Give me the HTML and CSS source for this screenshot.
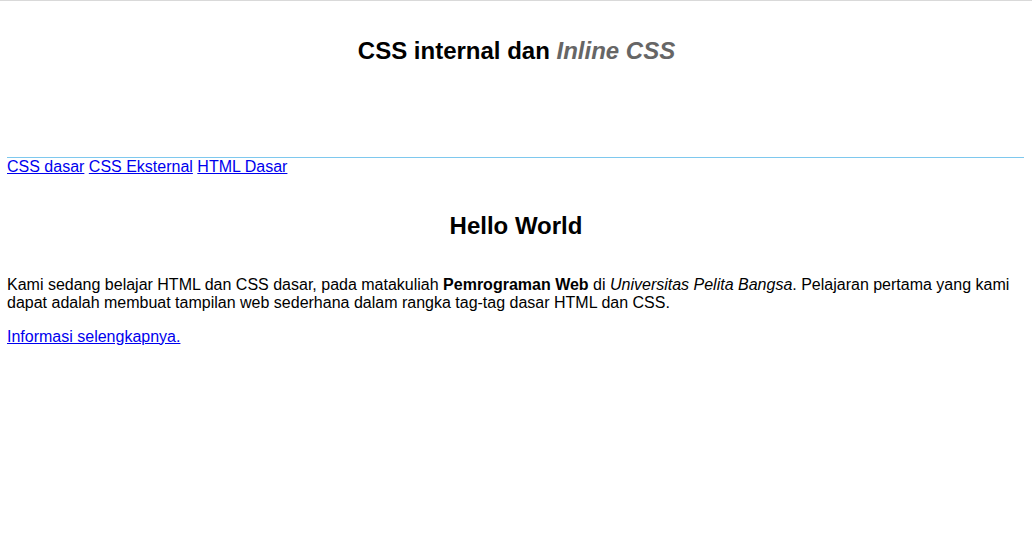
FILE: index.html
```html
<!DOCTYPE html>
<html lang="id">
<head>
<meta charset="utf-8">
<title>CSS internal dan Inline CSS</title>
<link rel="stylesheet" href="styles.css">
</head>
<body>
<header class="header">
  <h1 class="title">CSS internal dan <i class="title-em">Inline CSS</i></h1>
</header>
<nav class="nav">
  <a href="#">CSS dasar</a> <a href="#">CSS Eksternal</a> <a href="#">HTML Dasar</a>
</nav>
<main class="content">
  <h2 class="hello">Hello World</h2>
  <p class="text">Kami sedang belajar HTML dan CSS dasar, pada matakuliah <b>Pemrograman Web</b> di <i>Universitas Pelita Bangsa</i>. Pelajaran pertama yang kami dapat adalah membuat tampilan web sederhana dalam rangka tag-tag dasar HTML dan CSS.</p>
  <p class="more"><a href="#">Informasi selengkapnya.</a></p>
</main>
</body>
</html>
```
FILE: styles.css
```css
html {
  border-top: 1px solid #d9d9d9;
  background: #ffffff;
}
body {
  margin: 0 8px 0 7px;
  font-family: "Liberation Sans", Arial, sans-serif;
  font-size: 16px;
  color: #000000;
}
a {
  color: #0000ee;
  text-decoration: underline;
}
.header {
  margin-left: -7px;
  padding: 36px 0 0 9px;
  height: 157px;
  box-sizing: border-box;
  border-bottom: 1px solid #7ec8ee;
}
.title {
  margin: 0;
  font-size: 24px;
  font-weight: bold;
  text-align: center;
}
.title-em {
  color: #666666;
}
.nav {
  margin: 0;
}
.hello {
  margin: 35.6px 0 36px;
  padding-left: 1px;
  font-size: 24px;
  font-weight: bold;
  text-align: center;
}
.text {
  margin: 0 0 16px;
}
.more {
  margin: 0;
}
```
